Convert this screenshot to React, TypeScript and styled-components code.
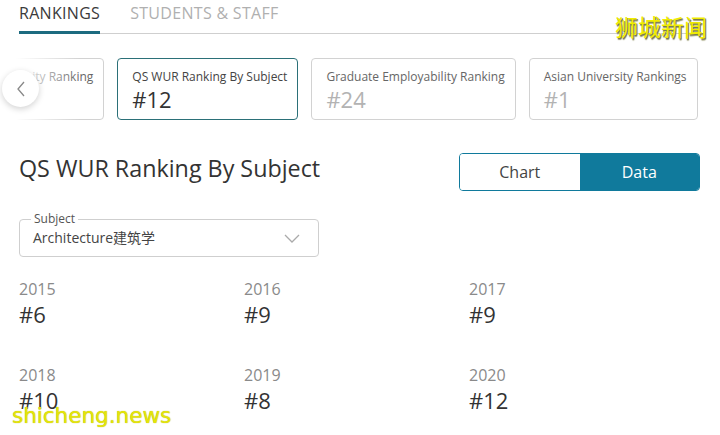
import React, { FC } from "react";
import styled, { createGlobalStyle } from "styled-components";

const teal = "#107a9c";
const tealDark = "#1d6b80";

const GlobalStyle = createGlobalStyle`
  html, body {
    margin: 0;
    padding: 0;
    background: #fff;
    overflow: hidden;
  }
  body {
    font-family: "Open Sans", "Noto Sans CJK SC", sans-serif;
    color: #333;
  }
`;

interface RankCard {
  label: string;
  rank: string;
  active?: boolean;
}

const cards: RankCard[] = [
  { label: "QS World University Ranking", rank: "#11" },
  { label: "QS WUR Ranking By Subject", rank: "#12", active: true },
  { label: "Graduate Employability Ranking", rank: "#24" },
  { label: "Asian University Rankings", rank: "#1" },
];

const years = [
  { year: "2015", rank: "#6" },
  { year: "2016", rank: "#9" },
  { year: "2017", rank: "#9" },
  { year: "2018", rank: "#10" },
  { year: "2019", rank: "#8" },
  { year: "2020", rank: "#12" },
];

const App: FC = () => {
  return (
    <Page>
      <GlobalStyle />
      <TabBar>
        <Tab $active>RANKINGS</Tab>
        <Tab>STUDENTS &amp; STAFF</Tab>
      </TabBar>

      <Carousel>
        <Track>
          {cards.map((c, idx) => (
            <Card key={idx} $active={c.active}>
              <CardLabel $active={c.active}>{c.label}</CardLabel>
              <CardRank $active={c.active}>{c.rank}</CardRank>
            </Card>
          ))}
        </Track>
        <Fade />
        <PrevButton aria-label="previous">
          <svg width="10" height="16" viewBox="0 0 10 16">
            <polyline
              points="8,1 2,8 8,15"
              fill="none"
              stroke="#888"
              strokeWidth="1.3"
            />
          </svg>
        </PrevButton>
      </Carousel>

      <Header>
        <Title>QS WUR Ranking By Subject</Title>
        <Toggle>
          <ToggleButton>Chart</ToggleButton>
          <ToggleButton $active>Data</ToggleButton>
        </Toggle>
      </Header>

      <Select>
        <SelectLabel>Subject</SelectLabel>
        <SelectValue>Architecture建筑学</SelectValue>
        <svg width="16" height="9" viewBox="0 0 16 9">
          <polyline
            points="1,1 8,8 15,1"
            fill="none"
            stroke="#aaa"
            strokeWidth="1.3"
          />
        </svg>
      </Select>

      <YearGrid>
        {years.map((y) => (
          <YearItem key={y.year}>
            <Year>{y.year}</Year>
            <YearRank>{y.rank}</YearRank>
          </YearItem>
        ))}
      </YearGrid>

      <MarkCn>狮城新闻</MarkCn>
      <MarkEn>shicheng.news</MarkEn>
    </Page>
  );
};

const Page = styled.div`
  position: relative;
  width: 720px;
  height: 435px;
  overflow: hidden;
`;

const TabBar = styled.div`
  display: flex;
  gap: 30px;
  margin: 0 19px;
  border-bottom: 1px solid #cfcfcf;
`;

const Tab = styled.div<{ $active?: boolean }>`
  font-size: 16px;
  line-height: 20px;
  letter-spacing: 0.3px;
  padding: 3px 0 8px;
  margin-bottom: -1px;
  color: ${(p) => (p.$active ? "#3a3a3a" : "#b0b0b0")};
  border-bottom: 3px solid ${(p) => (p.$active ? tealDark : "transparent")};
`;

const Carousel = styled.div`
  position: relative;
  margin-top: 24px;
  overflow: hidden;
`;

const Track = styled.div`
  display: flex;
  gap: 13px;
  margin-left: -81px;
`;

const Card = styled.div<{ $active?: boolean }>`
  flex: none;
  padding: 10px 10px 6px 14px;
  border: 1px solid ${(p) => (p.$active ? "#2b7078" : "#d2d2d2")};
  border-radius: 4px;
  white-space: nowrap;
`;

const CardLabel = styled.div<{ $active?: boolean }>`
  font-size: 12px;
  line-height: 16px;
  color: ${(p) => (p.$active ? "#444" : "#666")};
`;

const CardRank = styled.div<{ $active?: boolean }>`
  font-size: 22px;
  line-height: 28px;
  color: ${(p) => (p.$active ? "#333" : "#b3b3b3")};
`;

const Fade = styled.div`
  position: absolute;
  left: 0;
  top: 0;
  bottom: 0;
  width: 80px;
  background: linear-gradient(
    to right,
    rgba(255, 255, 255, 1) 20%,
    rgba(255, 255, 255, 0)
  );
`;

const PrevButton = styled.button`
  position: absolute;
  left: 2px;
  top: 12px;
  width: 37px;
  height: 37px;
  border-radius: 50%;
  border: none;
  background: #fff;
  box-shadow: 0 2px 6px rgba(0, 0, 0, 0.18);
  display: flex;
  align-items: center;
  justify-content: center;
  padding: 0;
`;

const Header = styled.div`
  display: flex;
  justify-content: space-between;
  align-items: flex-start;
  margin: 29px 20px 0 19px;
`;

const Title = styled.h2`
  margin: 3px 0 0;
  font-size: 23.3px;
  line-height: 32px;
  font-weight: 400;
  color: #333;
`;

const Toggle = styled.div`
  display: flex;
  margin-top: 4px;
  width: 241px;
  height: 38px;
  box-sizing: border-box;
  border: 1px solid ${teal};
  border-radius: 4px;
  overflow: hidden;
`;

const ToggleButton = styled.div<{ $active?: boolean }>`
  flex: 1;
  display: flex;
  align-items: center;
  justify-content: center;
  font-size: 16px;
  color: ${(p) => (p.$active ? "#fff" : "#444")};
  background: ${(p) => (p.$active ? teal : "#fff")};
`;

const Select = styled.div`
  position: relative;
  display: flex;
  align-items: center;
  justify-content: space-between;
  box-sizing: border-box;
  width: 300px;
  height: 38px;
  margin: 28px 0 0 19px;
  padding: 0 18px 0 13px;
  border: 1px solid #cfcfcf;
  border-radius: 4px;
`;

const SelectLabel = styled.span`
  position: absolute;
  left: 11px;
  top: -9px;
  padding: 0 3px;
  background: #fff;
  font-size: 12px;
  line-height: 16px;
  color: #555;
`;

const SelectValue = styled.span`
  font-size: 14px;
  color: #444;
  margin-top: -2px;
`;

const YearGrid = styled.div`
  display: grid;
  grid-template-columns: repeat(3, 225px);
  row-gap: 36px;
  margin: 21px 0 0 19px;
`;

const YearItem = styled.div`
  display: flex;
  flex-direction: column;
`;

const Year = styled.div`
  font-size: 16px;
  line-height: 22px;
  color: #8a8a8a;
`;

const YearRank = styled.div`
  font-size: 22px;
  line-height: 28px;
  color: #333;
`;

const MarkCn = styled.div`
  position: absolute;
  right: 13px;
  top: 11px;
  font-family: "Noto Sans CJK SC", sans-serif;
  font-size: 23px;
  font-weight: 400;
  line-height: 30px;
  color: #f0ec00;
  text-shadow: 1px 1px 0 #7a7a50, 1px 2px 1px #9a9a70;
`;

const MarkEn = styled.div`
  position: absolute;
  left: 12px;
  top: 401px;
  font-family: "DejaVu Sans", sans-serif;
  font-size: 21.5px;
  line-height: 30px;
  color: #e4e40a;
  text-shadow: 0 0 1px #b0b000;
`;

export default App;
